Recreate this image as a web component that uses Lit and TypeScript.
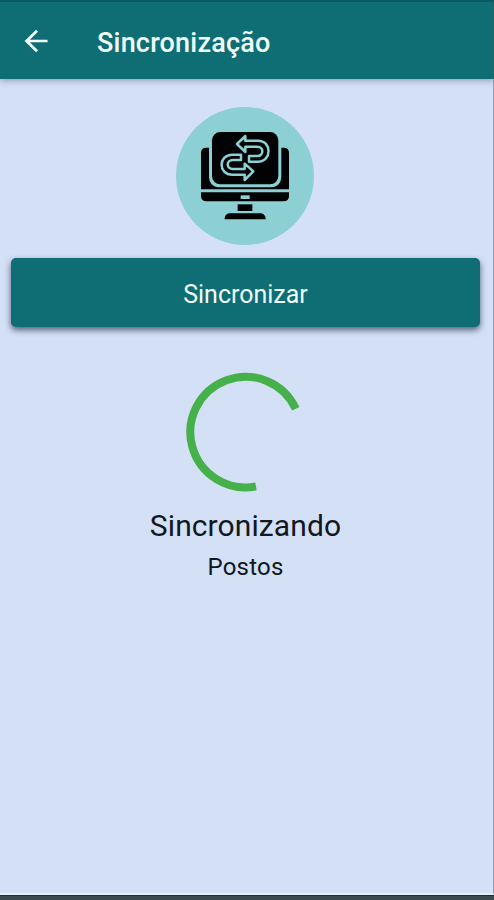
import { LitElement, html, css } from "lit";
import { customElement } from "lit/decorators.js";

@customElement("sync-badge")
class SyncBadge extends LitElement {
  static styles = css`
    :host { display: block; width: 138px; height: 138px; }
    .art { display: block; width: 100%; height: 100%; }
    .disc { fill: #8cd0d3; }
    .ink { fill: #000203; }
    .gap { fill: #8cd0d3; }
    .arrow { fill: #000203; stroke: #8cd0d3; stroke-width: 7.5; stroke-linejoin: round; }
  `;
  render() {
    return html`<svg class="art" viewBox="19 20 414 414">
      <circle class="disc" cx="226" cy="227" r="207" />
      <path class="ink" d="M94 267V158Q94 142 110 142H118V226Q118 261 153 261H299Q335 261 335 226V142H342Q358 142 358 158V267Z" />
      <rect class="ink" x="127" y="95" width="199" height="157" rx="25" />
      <path class="ink" d="M94 276H358V287Q358 303 341 303H111Q94 303 94 287Z" />
      <rect class="gap" x="213" y="285" width="27" height="11" />
      <rect class="ink" x="204" y="312" width="44" height="20" />
      <path class="ink" d="M165 357C165 344 172 339 182 339H270C280 339 288 344 288 357Z" />
      <path class="arrow" d="M202 131L227 107V121H265C307 121 307 184 265 184H238V167H263C283 167 283 139 263 139H227V155Z" />
      <path class="arrow" d="M251 213L225 239V223H188C145 223 145 163 188 163H214V179H190C169 179 169 206 190 206H225V190Z" />
    </svg>`;
  }
}

@customElement("sync-spinner")
class SyncSpinner extends LitElement {
  static styles = css`
    :host { display: block; width: 120px; height: 120px; }
    .art { display: block; width: 100%; height: 100%; }
    .arc { fill: none; stroke: #46b04a; stroke-width: 8; }
  `;
  render() {
    return html`<svg class="art" viewBox="0 0 120 120">
      <path class="arc" d="M70 114.4A55.3 55.3 0 1 1 109.8 36.8" />
    </svg>`;
  }
}

@customElement("app-root")
class AppRoot extends LitElement {
  static styles = css`
    :host {
      display: flex;
      flex-direction: column;
      box-sizing: border-box;
      height: 900px;
      background: #d4e0f6;
      color: #101820;
      font-family: Roboto, sans-serif;
    }
    .bar {
      box-sizing: border-box;
      flex: none;
      height: 79px;
      display: flex;
      align-items: center;
      padding: 1px 0 0 24px;
      background: #0e6e73;
      border-top: 2px solid #095a60;
      border-right: 1px solid #2b6268;
      box-shadow: 0 1px 7px rgba(50, 65, 85, 0.5);
      z-index: 1;
    }
    .back { display: block; width: 25px; height: 24px; margin-right: 48px; }
    .back path { fill: none; stroke: #f4ffff; stroke-width: 2.7; }
    .title { margin: 0; padding-top: 3px; color: #f0fcfc; font-size: 27px; line-height: 32px; font-weight: 500; letter-spacing: 0.2px; white-space: nowrap; }
    .content {
      flex: 1;
      display: flex;
      flex-direction: column;
      align-items: center;
      padding: 28px 13px 0 11px;
      border-right: 1px solid #8f9fb1;
      border-bottom: 2px solid #e1f1f6;
    }
    sync-badge { margin-right: 1px; }
    .sync {
      width: 469px;
      height: 69px;
      margin: 13px 0 45px;
      padding: 5px 0 0;
      border: 0;
      border-radius: 5px;
      background: #0e6e73;
      box-shadow: 0 3px 6px rgba(40, 50, 70, 0.75);
      color: #f0fcfc;
      font: 400 25px/32px Roboto, sans-serif;
    }
    .status { margin: 15px 0 0; font-size: 30px; line-height: 38px; letter-spacing: 0.1px; }
    .item { margin: 7px 0 0; font-size: 24px; line-height: 30px; letter-spacing: 0.2px; }
    .foot { flex: none; height: 4px; background: #3b4b4e; border-top: 1px solid #1f2f34; }
  `;
  render() {
    return html`
      <header class="bar">
        <svg class="back" viewBox="0 0 25 24">
          <path d="M23.5 12H3M13 1.7L2.5 12L13 22.3" />
        </svg>
        <h1 class="title">Sincronização</h1>
      </header>
      <main class="content">
        <sync-badge></sync-badge>
        <button class="sync">Sincronizar</button>
        <sync-spinner></sync-spinner>
        <p class="status">Sincronizando</p>
        <p class="item">Postos</p>
      </main>
      <div class="foot"></div>
    `;
  }
}
